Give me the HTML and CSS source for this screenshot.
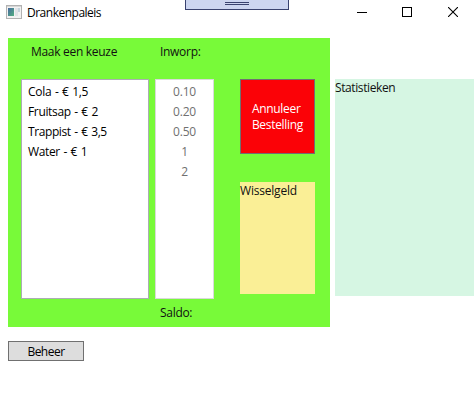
FILE: index.html
```html
<!DOCTYPE html>
<html lang="nl">
<head>
<meta charset="utf-8">
<title>Drankenpaleis</title>
<link rel="stylesheet" href="styles.css">
</head>
<body>
<header class="titlebar">
  <svg class="app-icon" width="16" height="14" viewBox="0 0 16 14" shape-rendering="crispEdges">
    <defs><linearGradient id="pane" x1="0" y1="0" x2="1" y2="1"><stop offset="0" stop-color="#4868a0"/><stop offset="1" stop-color="#52b080"/></linearGradient></defs>
    <rect x=".5" y=".5" width="15" height="13" fill="#f2f2f2" stroke="#b2b2b2"/>
    <rect x="1" y="1" width="14" height="1" fill="#d6d6d6"/>
    <rect x="2" y="3" width="6" height="8" fill="url(#pane)"/>
    <rect x="9" y="3" width="3" height="8" fill="#e0e3e7"/>
    <rect x="12" y="3" width="2" height="4" fill="#c4d2dc"/>
  </svg>
  <span class="title">Drankenpaleis</span>
  <div class="controls">
    <svg width="10" height="10" viewBox="0 0 10 10" shape-rendering="crispEdges"><path d="M0 5.5H10" stroke="#000"/></svg>
    <svg width="10" height="10" viewBox="0 0 10 10" shape-rendering="crispEdges"><rect x=".5" y=".5" width="9" height="9" fill="none" stroke="#000"/></svg>
    <svg class="close" width="10" height="10" viewBox="0 0 10 10"><path d="M0 0L10 10M10 0L0 10" stroke="#000" stroke-width="1.1"/></svg>
  </div>
  <div class="debug-tab"><i class="grip"></i></div>
</header>
<main class="content">
  <section class="machine">
    <div class="column">
      <h2 class="label label-choice">Maak een keuze</h2>
      <ul class="list drinks">
        <li class="cola">Cola - € 1,5</li>
        <li class="fruitsap">Fruitsap - € 2</li>
        <li class="trappist">Trappist - € 3,5</li>
        <li class="water">Water - € 1</li>
      </ul>
    </div>
    <div class="column">
      <h2 class="label">Inworp:</h2>
      <ul class="list coins">
        <li>0.10</li><li>0.20</li><li>0.50</li><li>1</li><li>2</li>
      </ul>
      <div class="label balance">Saldo:</div>
    </div>
    <div class="actions">
      <button class="cancel"><span>Annuleer<br>Bestelling</span></button>
      <div class="change">Wisselgeld</div>
    </div>
  </section>
  <aside class="stats">Statistieken</aside>
</main>
<button class="manage">Beheer</button>
</body>
</html>
```
FILE: styles.css
```css
* { box-sizing: border-box; }
body {
  margin: 0;
  width: 476px;
  height: 401px;
  overflow: hidden;
  background: #fff;
  color: #111;
  font: 12px/16px "Open Sans", "Noto Sans", sans-serif;
  letter-spacing: -0.3px;
}
button { font: inherit; letter-spacing: inherit; border-radius: 0; padding: 0; }
.titlebar {
  position: relative;
  display: flex;
  align-items: center;
  height: 38px;
  padding: 0 18px 13px 6px;
}
.app-icon { margin-top: -1px; }
.title { margin-left: 5px; color: #000; letter-spacing: -0.5px; }
.controls { display: flex; gap: 35px; margin: -1px 0 0 auto; }
.close { margin-left: 1px; }
.debug-tab {
  position: absolute;
  left: 185px;
  top: 0;
  width: 104px;
  height: 10px;
  border: 1px solid #39426f;
  border-top: 0;
  background: #ccd5f0;
}
.grip {
  display: block;
  width: 24px;
  height: 3px;
  margin: 2px 0 0 39px;
  border: solid #39426f;
  border-width: 1px 0;
}
.content { display: flex; gap: 5px; padding-left: 8px; }
.machine {
  display: flex;
  width: 322px;
  height: 289px;
  padding-left: 13px;
  background: #78fa39;
}
.column { margin-right: 6px; }
.label { margin: 0; height: 41px; padding: 6px 0 0 5px; font: inherit; }
.label-choice { padding-left: 10px; }
.balance { height: 28px; }
.list {
  margin: 0;
  height: 220px;
  padding: 2px 0;
  list-style: none;
  line-height: 20px;
  background: #fff;
  border: 1px solid #abadb3;
}
.drinks { width: 128px; padding-left: 6px; color: #000; letter-spacing: -0.35px; word-spacing: 0.8px; }
.cola { letter-spacing: -0.3px; }
.trappist { letter-spacing: -0.4px; }
.coins { width: 59px; text-align: center; color: #707070; border-color: #d9d9d9; letter-spacing: -0.2px; }
.actions { margin: 41px 0 0 20px; }
.cancel {
  display: flex;
  align-items: center;
  justify-content: center;
  width: 75px;
  height: 75px;
  border: 1px solid #707070;
  background: #fb0207;
  color: #fff;
  text-align: left;
}
.change { width: 75px; height: 112px; margin-top: 28px; padding-top: 1px; background: #faef96; letter-spacing: -0.2px; }
.stats { width: 139px; height: 217px; margin-top: 41px; padding-top: 1px; background: #d6f6e3; letter-spacing: -0.4px; }
.manage {
  display: block;
  width: 76px;
  height: 20px;
  margin: 14px 0 0 8px;
  padding-top: 2px;
  border: 1px solid #707070;
  background: #ddd;
  color: #000;
  letter-spacing: -0.5px;
}
```
